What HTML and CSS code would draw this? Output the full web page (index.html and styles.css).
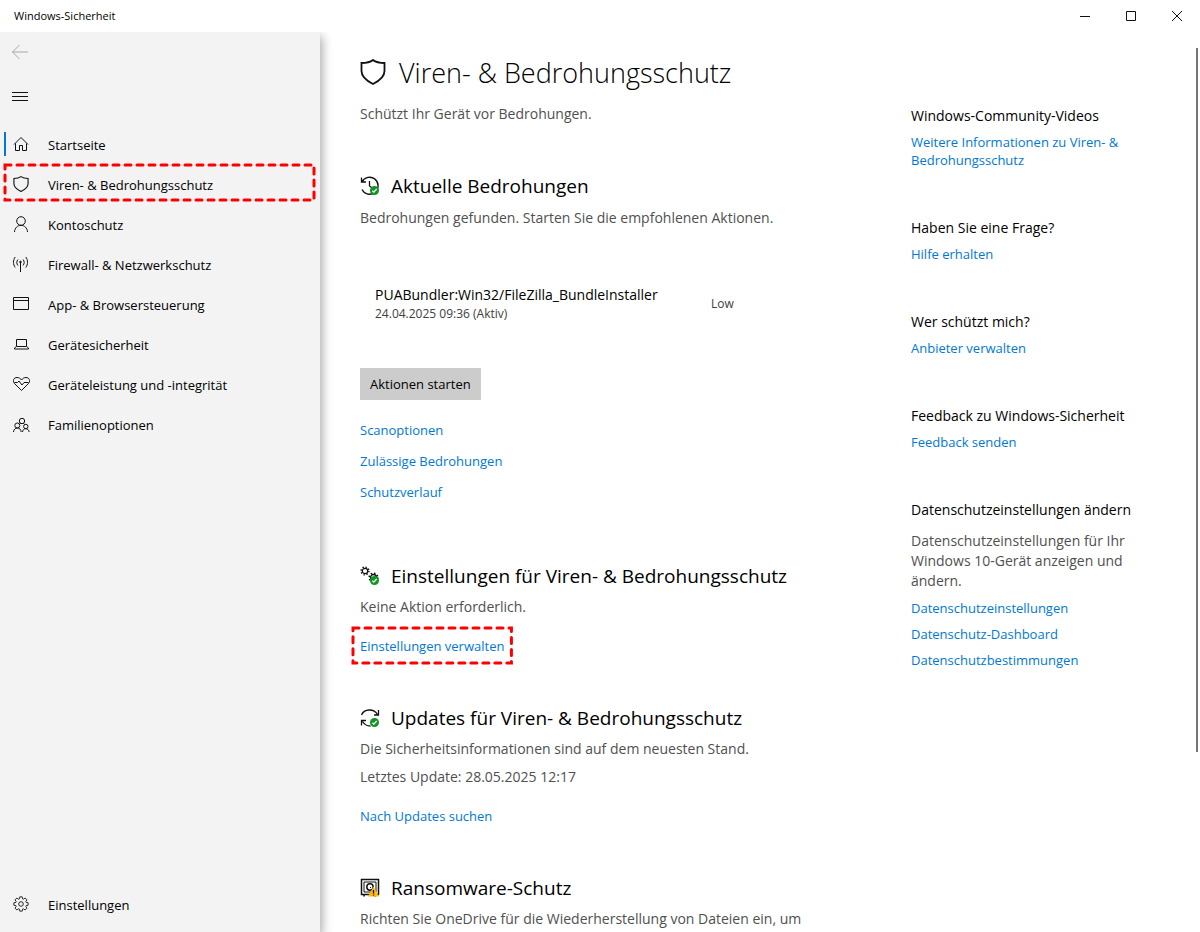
FILE: index.html
```html
<!DOCTYPE html>
<html lang="de">
<head>
    <meta charset="UTF-8">
    <meta name="viewport" content="width=device-width, initial-scale=1.0">
    <title>Windows-Sicherheit</title>
    <link rel="stylesheet" href="styles.css">
</head>
<body>
    <!-- Shared icons -->
    <svg class="sprite" aria-hidden="true">
        <symbol id="shield" viewBox="0 0 26 26">
            <path d="M13 1C10 3.300 6 4 1.500 4V12C1.500 17.500 5 21 13 25C21 21 24.500 17.500 24.500 12V4C20 4 16 3.300 13 1Z"/>
        </symbol>
        <symbol id="gear" viewBox="0 0 18 18">
            <path d="M7.600 1h2.800l.4 2.200 1 .4 1.900-1.300 2 2-1.300 1.900.4 1 2.200.4v2.800l-2.200.4-.4 1 1.300 1.900-2 2-1.900-1.300-1 .4-.4 2.200H7.600l-.4-2.200-1-.4-1.900 1.300-2-2 1.300-1.900-.4-1L1 10.400V7.600l2.200-.4.4-1-1.300-1.900 2-2 1.900 1.300 1-.4z"/>
            <circle cx="9" cy="9" r="2.600"/>
        </symbol>
        <symbol id="small-gear" viewBox="0 0 10 10">
            <circle cx="5" cy="5" r="2.700" stroke-width="1.200"/>
            <circle cx="5" cy="5" r="3.900" stroke-width="1.400" stroke-dasharray="1.400 1.663"/>
        </symbol>
        <symbol id="check" viewBox="0 0 10 10">
            <circle cx="5" cy="5" r="5" fill="#0e9524" stroke="none"/>
            <path d="M2.700 5.200l1.600 1.600 3.100-3.400" stroke="#fff" stroke-width="1.500"/>
        </symbol>
    </svg>

    <header class="titlebar">
        <span class="title">Windows-Sicherheit</span>
        <div class="window-buttons">
            <button type="button" aria-label="Minimieren">
                <svg width="12" height="12" viewBox="0 0 12 12"><path d="M1 6.500h10"/></svg>
            </button>
            <button type="button" aria-label="Maximieren">
                <svg width="12" height="12" viewBox="0 0 12 12"><path d="M1.500 1.500h9v9h-9z"/></svg>
            </button>
            <button type="button" aria-label="Schließen">
                <svg width="12" height="12" viewBox="0 0 12 12"><path d="M1 1l10 10M11 1L1 11"/></svg>
            </button>
        </div>
    </header>

    <div class="app">
        <aside class="sidebar">
            <button type="button" class="icon-button back" aria-label="Zurück">
                <svg width="18" height="16" viewBox="0 0 18 16"><path d="M1.500 8H17M8.500 1l-7 7 7 7"/></svg>
            </button>
            <button type="button" class="icon-button menu" aria-label="Menü">
                <svg width="18" height="10" viewBox="0 0 18 10"><path d="M1 .5h16M1 4.500h16M1 8.500h16"/></svg>
            </button>

            <nav class="nav">
                <a href="#" class="nav-item active">
                    <svg width="16" height="18" viewBox="0 0 16 18"><path d="M1 8.500L8 1.500l7 7M2.500 7.500v7h4v-5h3v5h4v-7"/></svg>
                    Startseite
                </a>
                <a href="#" class="nav-item">
                    <svg width="16" height="18"><use href="#shield" width="16" height="16" stroke-width="1.800"/></svg>
                    Viren- &amp; Bedrohungsschutz
                    <svg class="highlight"><rect/></svg>
                </a>
                <a href="#" class="nav-item">
                    <svg width="16" height="18" viewBox="0 0 16 18"><circle cx="8" cy="5" r="4.300"/><path d="M1.500 16c.2-4 3-6.700 6.500-6.700s6.300 2.700 6.500 6.700"/></svg>
                    Kontoschutz
                </a>
                <a href="#" class="nav-item">
                    <svg width="16" height="18" viewBox="0 0 16 18"><path d="M7.500 6v10M5 3.500c-1.600 1.800-1.600 4.200 0 6M10 3.500c1.600 1.800 1.600 4.200 0 6M2.200 1c-2.300 3.200-2.300 7.300 0 10.500M12.800 1c2.300 3.200 2.300 7.300 0 10.500"/><circle cx="7.500" cy="6" r=".8" fill="#111"/></svg>
                    Firewall- &amp; Netzwerkschutz
                </a>
                <a href="#" class="nav-item">
                    <svg width="16" height="18" viewBox="0 0 16 18"><path d="M.5 1.500h15v12H.5zM.5 4.500h15"/></svg>
                    App- &amp; Browsersteuerung
                </a>
                <a href="#" class="nav-item">
                    <svg width="16" height="16" viewBox="0 0 16 16"><path d="M3.500 9V2.500h10V9M3.300 9.500h10.400l1.800 1.500v1h-14v-1z"/></svg>
                    Gerätesicherheit
                </a>
                <a href="#" class="nav-item">
                    <svg width="17" height="18" viewBox="0 0 17 18"><path d="M8.500 14.500L1.300 7.300C-.8 4.500 1 1.500 4 1.500c2 0 3.500 1 4.500 2.500 1-1.500 2.500-2.500 4.500-2.500 3 0 4.800 3 2.700 5.800z"/><path d="M1.500 6.500h3l1.500-1.500 3 4L11 6.500h4.500"/></svg>
                    Geräteleistung und -integrität
                </a>
                <a href="#" class="nav-item">
                    <svg width="17" height="16" viewBox="0 0 17 16"><circle cx="9" cy="4" r="2.700"/><circle cx="4.300" cy="8.500" r="2.500"/><circle cx="12.800" cy="9.500" r="2.200"/><path d="M.5 15c.2-2.500 1.700-4 3.800-4S8 12.500 8.200 15M9.500 15c.2-2 1.400-3.300 3.300-3.300s3.100 1.300 3.300 3.300M7.500 6.200L6.500 7.200M10.500 6.200l1 1.300"/></svg>
                    Familienoptionen
                </a>
            </nav>

            <a href="#" class="nav-item settings">
                <svg width="16" height="18"><use href="#gear" width="16" height="16"/></svg>
                Einstellungen
            </a>
        </aside>

        <main class="content">
            <div class="main-column">
                <h1>
                    <svg width="26" height="28"><use href="#shield" width="26" height="26" stroke-width="1.800"/></svg>
                    Viren- &amp; Bedrohungsschutz
                </h1>
                <p class="intro">Schützt Ihr Gerät vor Bedrohungen.</p>

                <section class="threats">
                    <h2>
                        <svg width="20" height="20" viewBox="0 0 20 20">
                            <path d="M2 6A8.500 8.500 0 1 1 2 13.500M1.500 1.500v4.500h4.500M9.500 5v5l4 3" stroke-width="1.300"/>
                            <use href="#check" x="10" y="10" width="9" height="9"/>
                        </svg>
                        Aktuelle Bedrohungen
                    </h2>
                    <p>Bedrohungen gefunden. Starten Sie die empfohlenen Aktionen.</p>
                    <div class="threat">
                        <div>
                            <div class="threat-name">PUABundler:Win32/FileZilla_BundleInstaller</div>
                            <div class="threat-date">24.04.2025 09:36 (Aktiv)</div>
                        </div>
                        <div class="threat-level">Low</div>
                    </div>
                    <button type="button" class="action">Aktionen starten</button>
                    <div class="links">
                        <a href="#">Scanoptionen</a>
                        <a href="#">Zulässige Bedrohungen</a>
                        <a href="#">Schutzverlauf</a>
                    </div>
                </section>

                <section>
                    <h2>
                        <svg width="20" height="20" viewBox="0 0 20 20">
                            <use href="#small-gear" x="0" y="0" width="10" height="10"/>
                            <use href="#small-gear" x="8" y="6" width="11" height="11"/>
                            <use href="#check" x="10" y="10" width="9" height="9"/>
                        </svg>
                        Einstellungen für Viren- &amp; Bedrohungsschutz
                    </h2>
                    <p>Keine Aktion erforderlich.</p>
                    <a href="#" class="section-link">Einstellungen verwalten<svg class="highlight"><rect/></svg></a>
                </section>

                <section>
                    <h2>
                        <svg width="20" height="20" viewBox="0 0 20 20">
                            <path d="M1.500 7C4 .5 14 .3 17.500 6.500M18.500 2v5H14M1.500 17.500v-5H6M2.500 13.500c1.800 3 4 4.500 8 4.500" stroke-width="1.300"/>
                            <use href="#check" x="10" y="10" width="9" height="9"/>
                        </svg>
                        Updates für Viren- &amp; Bedrohungsschutz
                    </h2>
                    <p>Die Sicherheitsinformationen sind auf dem neuesten Stand.</p>
                    <p>Letztes Update: 28.05.2025 12:17</p>
                    <a href="#" class="section-link">Nach Updates suchen</a>
                </section>

                <section>
                    <h2>
                        <svg width="20" height="20" viewBox="0 0 20 20">
                            <path d="M1.500 1.500h17v15h-17zM4 16.500v2M15 16.500v2" stroke-width="1.500"/>
                            <path d="M4 4h12v10H4z" stroke-width="1"/>
                            <circle cx="10" cy="9" r="3.200" stroke-width="1.500"/>
                            <path d="M7 6l1 1M13 6l-1 1M7 12l1-1M10 9l1 1"/>
                            <path d="M13.500 8.500L19 18.500H8z" fill="#ffb900" stroke="none"/>
                            <path d="M13.500 12v3.500M13.500 16.500v1" stroke-width="1.300"/>
                        </svg>
                        Ransomware-Schutz
                    </h2>
                    <p>Richten Sie OneDrive für die Wiederherstellung von Dateien ein, um</p>
                </section>
            </div>

            <aside class="help-column">
                <section>
                    <h3>Windows-Community-Videos</h3>
                    <a href="#">Weitere Informationen zu Viren- &amp; Bedrohungsschutz</a>
                </section>
                <section>
                    <h3>Haben Sie eine Frage?</h3>
                    <a href="#">Hilfe erhalten</a>
                </section>
                <section>
                    <h3>Wer schützt mich?</h3>
                    <a href="#">Anbieter verwalten</a>
                </section>
                <section>
                    <h3>Feedback zu Windows-Sicherheit</h3>
                    <a href="#">Feedback senden</a>
                </section>
                <section>
                    <h3>Datenschutzeinstellungen ändern</h3>
                    <p>Datenschutzeinstellungen für Ihr Windows 10-Gerät anzeigen und ändern.</p>
                    <a href="#">Datenschutzeinstellungen</a>
                    <a href="#">Datenschutz-Dashboard</a>
                    <a href="#">Datenschutzbestimmungen</a>
                </section>
            </aside>

            <div class="scrollbar"><div class="thumb"></div></div>
        </main>
    </div>
</body>
</html>
```
FILE: styles.css
```css
* {
    margin: 0;
    padding: 0;
    box-sizing: border-box;
}

body {
    display: flex;
    flex-direction: column;
    height: 100vh;
    overflow: hidden;
    background: #fff;
    color: #000;
    font-family: 'Open Sans', 'Noto Sans', sans-serif;
    font-size: 14px;
    line-height: 20px;
}

svg {
    flex: none;
    fill: none;
    stroke: #111;
}

a {
    color: #0078d7;
    text-decoration: none;
    font-size: 13px;
}

button {
    border: none;
    background: none;
    font: inherit;
}

.sprite {
    display: none;
}

/* Title bar */
.titlebar {
    display: flex;
    flex: none;
    justify-content: space-between;
    align-items: center;
    height: 32px;
    padding-left: 14px;
    font-size: 11px;
}

.window-buttons {
    display: flex;
}

.window-buttons button {
    display: flex;
    justify-content: center;
    align-items: center;
    width: 46px;
    height: 32px;
}

.app {
    display: flex;
    flex: 1;
    min-height: 0;
}

/* Sidebar */
.sidebar {
    display: flex;
    flex: none;
    flex-direction: column;
    width: 320px;
    padding-bottom: 7px;
    background: #f3f3f3;
    box-shadow: 2px 4px 10px rgba(0, 0, 0, 0.35);
    clip-path: inset(0 -16px 0 0);
}

.icon-button {
    display: flex;
    align-items: center;
    height: 40px;
    padding-left: 11px;
}

.back svg {
    stroke: #a8a8a8;
}

.menu {
    margin: 5px 0 8px;
}

.nav-item {
    display: grid;
    grid-template-columns: 17px 1fr;
    column-gap: 18px;
    align-items: center;
    position: relative;
    height: 40px;
    padding-left: 13px;
    color: #000;
}

.nav-item.active::before {
    content: '';
    position: absolute;
    left: 4px;
    top: 7px;
    width: 2px;
    height: 24px;
    background: #0078d7;
}

.settings {
    margin-top: auto;
}

/* Dashed marker frame around an entry */
.highlight {
    position: absolute;
    top: -2px;
    left: 3px;
    width: calc(100% - 7px);
    height: 39px;
}

.highlight rect {
    x: 2px;
    y: 2px;
    width: calc(100% - 4px);
    height: calc(100% - 4px);
    stroke: #f00;
    stroke-width: 3px;
    stroke-linecap: round;
    stroke-dasharray: 6 6;
}

/* Content */
.content {
    display: flex;
    flex: 1;
    min-width: 0;
    padding-left: 40px;
}

.main-column {
    flex: 1;
    min-width: 0;
    padding: 21px 90px 0 0;
}

h1 {
    display: flex;
    align-items: center;
    gap: 13px;
    font-size: 27px;
    font-weight: 300;
    line-height: 40px;
}

h2 {
    display: flex;
    align-items: center;
    gap: 11px;
    margin-bottom: 7px;
    font-size: 19px;
    font-weight: 400;
    line-height: 28px;
}

p {
    color: #505050;
}

p + p {
    margin-top: 8px;
}

.intro {
    margin-top: 11px;
}

.main-column section {
    margin-top: 48px;
}

.threats h2 {
    margin-bottom: 8px;
}

.threat {
    display: grid;
    grid-template-columns: 336px 1fr;
    align-items: center;
    padding: 57px 0 45px 15px;
}

.threat-date,
.threat-level {
    color: #404040;
    font-size: 12px;
    line-height: 18px;
}

.action {
    height: 32px;
    padding: 0 10px;
    background: #ccc;
    font-size: 13px;
}

.links {
    display: flex;
    flex-direction: column;
    align-items: flex-start;
    gap: 11px;
    margin: 20px 0 60px;
}

.section-link {
    display: block;
    position: relative;
    width: fit-content;
    margin-top: 19px;
}

.section-link .highlight {
    top: -10px;
    left: -9px;
    width: calc(100% + 18px);
}

/* Help column */
.help-column {
    display: flex;
    flex: none;
    flex-direction: column;
    gap: 49px;
    width: 285px;
    padding: 74px 54px 0 0;
}

.help-column section {
    display: flex;
    flex-direction: column;
    align-items: flex-start;
    gap: 8px;
}

h3 {
    margin-bottom: -1px;
    font-size: 14px;
    font-weight: 400;
    white-space: nowrap;
}

.help-column p {
    margin-top: 4px;
}

.help-column a {
    line-height: 18px;
}

.scrollbar {
    flex: none;
    width: 4px;
    padding: 16px 0 180px;
}

.thumb {
    width: 2px;
    height: 100%;
    background: #767676;
}
```
